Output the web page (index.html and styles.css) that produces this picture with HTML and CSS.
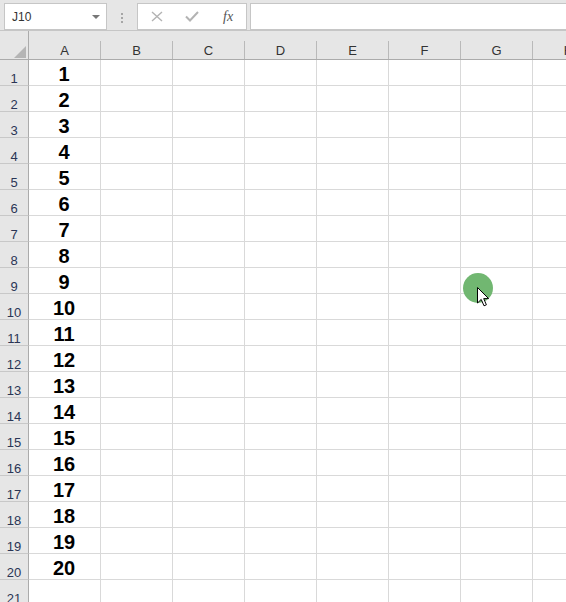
FILE: index.html
```html
<!DOCTYPE html>
<html lang="en">
<head>
  <meta charset="UTF-8">
  <title>Sheet1</title>
  <link rel="stylesheet" href="styles.css">
</head>
<body>

  <div class="toolbar">
    <div class="name-box">
      <span>J10</span>
      <span class="drop"></span>
    </div>
    <div class="grip"><i></i><i></i><i></i></div>
    <div class="fx-buttons">
      <svg width="12" height="11" viewBox="0 0 12 11"><path d="M1 1 L11 10 M11 1 L1 10" stroke="#b3b3b3" stroke-width="1.4" fill="none"/></svg>
      <svg width="14" height="11" viewBox="0 0 14 11"><path d="M1 5.5 L5 9.5 L13 1" stroke="#b3b3b3" stroke-width="2" fill="none"/></svg>
      <span class="fx">fx</span>
    </div>
    <div class="formula-input"></div>
  </div>

  <div class="sheet">
    <div class="row head-row">
      <div class="corner"><span class="tri"></span></div>
      <div class="col-head">A</div>
      <div class="col-head">B</div>
      <div class="col-head">C</div>
      <div class="col-head">D</div>
      <div class="col-head">E</div>
      <div class="col-head">F</div>
      <div class="col-head">G</div>
      <div class="col-head">H</div>
    </div>
    <div id="rows"></div>

    <!-- click highlight + pointer -->
    <div class="click-dot"></div>
    <svg class="pointer" width="13" height="20" viewBox="0 0 13 20">
      <path d="M0.5 0.5 L0.5 16 L4.2 12.4 L7 18.8 L9.4 17.8 L6.7 11.6 L11.6 11.6 Z" fill="#fff" stroke="#000" stroke-width="1"/>
    </svg>
    <div class="fade"></div>
  </div>

  <script>
    const rowsEl = document.getElementById('rows');
    const cols = 8;
    for (let r = 1; r <= 21; r++) {
      let html = '<div class="row"><div class="row-head">' + r + '</div>';
      for (let c = 0; c < cols; c++) {
        const val = (c === 0 && r <= 20) ? r : '';
        html += '<div class="cell">' + val + '</div>';
      }
      html += '</div>';
      rowsEl.insertAdjacentHTML('beforeend', html);
    }
  </script>

</body>
</html>
```

FILE: styles.css
```css
body {
  margin: 0;
  width: 566px;
  height: 602px;
  overflow: hidden;
  background: #fff;
  font-family: 'Liberation Sans', Arial, sans-serif;
}

.toolbar {
  background: #e6e6e6;
  border-bottom: 1px solid #c6c6c6;
  display: flex;
  align-items: flex-start;
  padding-top: 3px;
  box-sizing: border-box;
  height: 31px;
}

.name-box {
  margin-left: 4px;
  width: 103px;
  height: 27px;
  box-sizing: border-box;
  background: #fff;
  border: 1px solid #c6c6c6;
  display: flex;
  align-items: center;
  justify-content: space-between;
  padding: 0 6px 0 7px;
  font-size: 12px;
  color: #333;
}

.drop {
  width: 0;
  height: 0;
  border-left: 4px solid transparent;
  border-right: 4px solid transparent;
  border-top: 4px solid #777;
  margin-top: 1px;
}

.grip {
  width: 30px;
  display: flex;
  flex-direction: column;
  align-items: center;
  gap: 2px;
  padding-top: 10px;
}

.grip i {
  width: 2px;
  height: 2px;
  background: #a6a6a6;
}

.fx-buttons {
  width: 110px;
  height: 27px;
  box-sizing: border-box;
  background: #fff;
  border: 1px solid #c6c6c6;
  display: flex;
  align-items: center;
  padding-left: 13px;
  gap: 22px;
}

.fx {
  font-family: 'Liberation Serif', 'Times New Roman', serif;
  font-style: italic;
  font-size: 14px;
  color: #555;
  margin-left: 2px;
}

.formula-input {
  margin-left: 3px;
  flex: 1;
  height: 27px;
  box-sizing: border-box;
  background: #fff;
  border: 1px solid #c6c6c6;
  border-right: none;
}

.sheet {
  position: relative;
}

.row {
  display: flex;
}

.head-row {
  height: 28px;
  background: #e6e6e6;
  border-bottom: 1px solid #ababab;
}

.corner {
  width: 29px;
  flex: none;
  box-sizing: border-box;
  border-right: 1px solid #ababab;
  display: flex;
  align-items: flex-end;
  justify-content: flex-end;
  padding: 0 2px 1px 0;
}

.tri {
  width: 0;
  height: 0;
  border-left: 12px solid transparent;
  border-bottom: 12px solid #b5b5b5;
}

.col-head {
  width: 72px;
  flex: none;
  box-sizing: border-box;
  text-align: center;
  padding-top: 12px;
  padding-right: 1px;
  line-height: 15px;
  font-size: 13px;
  color: #333;
  background: linear-gradient(#b9b9b9, #b9b9b9) right bottom / 1px 18px no-repeat, #e6e6e6;
}

.row-head {
  width: 29px;
  height: 26px;
  flex: none;
  box-sizing: border-box;
  background: #e6e6e6;
  border-right: 1px solid #ababab;
  border-bottom: 1px solid #c8c8c8;
  text-align: center;
  font-size: 13px;
  line-height: 15px;
  padding-top: 11px;
  color: #2a3555;
}

.cell {
  width: 72px;
  height: 26px;
  flex: none;
  box-sizing: border-box;
  border-right: 1px solid #d9d9d9;
  border-bottom: 1px solid #d9d9d9;
  text-align: center;
  font-size: 20px;
  font-weight: bold;
  line-height: 22px;
  padding-top: 3px;
  padding-right: 1px;
  color: #000;
}

.click-dot {
  position: absolute;
  left: 463px;
  top: 242px;
  width: 30px;
  height: 30px;
  border-radius: 50%;
  background: #71b771;
}

.pointer {
  position: absolute;
  left: 477px;
  top: 256px;
}

.fade {
  position: absolute;
  left: 185px;
  right: 0;
  bottom: -4px;
  height: 5px;
  background: linear-gradient(90deg, rgba(246, 238, 240, 0), rgba(246, 238, 240, 0.9) 40px);
}
```
